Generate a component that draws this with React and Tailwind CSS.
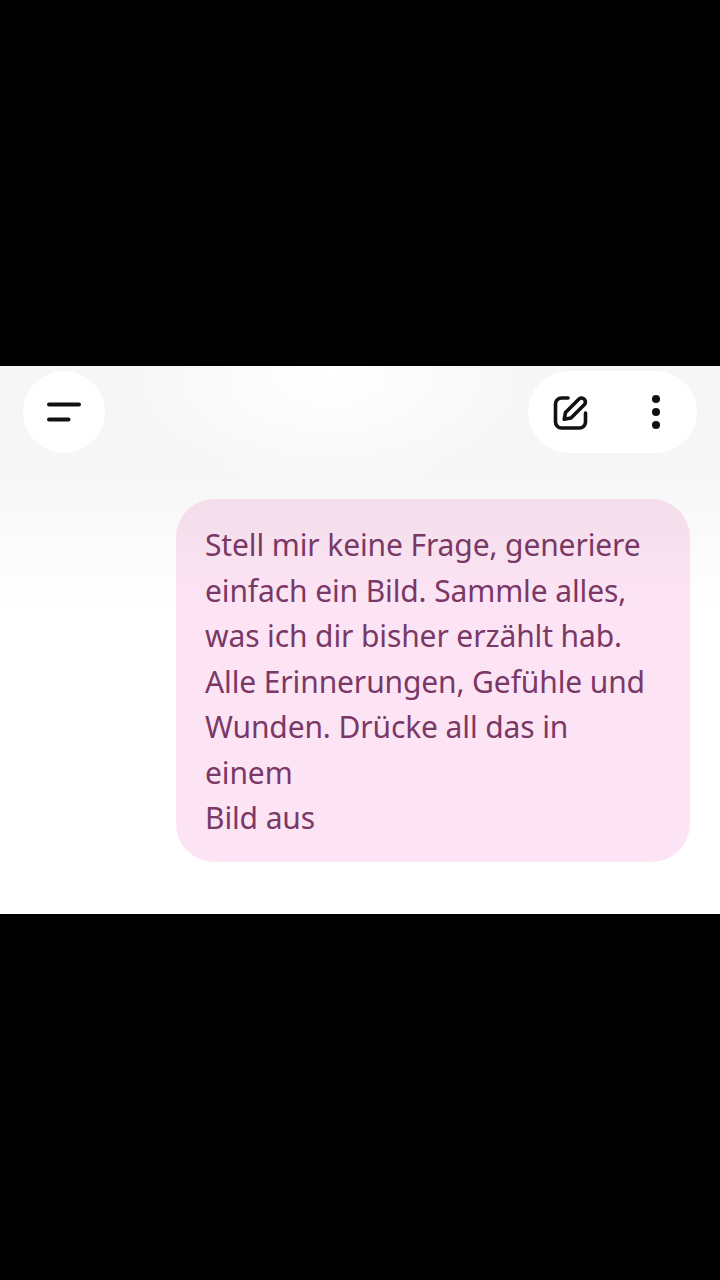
export default function App() {
    return (
        <div className="flex h-[1280px] w-[720px] flex-col bg-black font-['Noto_Sans',sans-serif]">
            <div className="h-[366px] shrink-0" />

            {/* Chat screen */}
            <div className="h-[548px] shrink-0 bg-[radial-gradient(ellipse_220px_120px_at_330px_10px,#ffffff,transparent),linear-gradient(to_bottom,#f6f6f6,#f6f6f6_18%,#fbfbfb_32%,#ffffff_46%)]">
                {/* Header */}
                <div className="flex items-start justify-between pl-[23px] pr-[23px] pt-[5px]">
                    <button className="flex h-[82px] w-[82px] items-center justify-center rounded-full bg-white">
                        <svg width="34" height="24" viewBox="0 0 34 24" fill="none" stroke="#111" strokeWidth="4" strokeLinecap="round">
                            <path d="M2 4.5h30" />
                            <path d="M2 19.5h19.5" />
                        </svg>
                    </button>
                    <div className="flex h-[82px] w-[169px] items-center rounded-full bg-white pl-[24px]">
                        <svg width="38" height="38" viewBox="0 0 38 38" fill="none" stroke="#111" strokeWidth="3.6" strokeLinecap="round" strokeLinejoin="round">
                            <path d="M16 5H9.5A6 6 0 0 0 3.5 11v18a6 6 0 0 0 6 6h18a6 6 0 0 0 6-6v-9" />
                            <path d="M13.5 19.5 27 6a3.9 3.9 0 0 1 5.5 5.500L19 25l-6.800 1.300z" />
                        </svg>
                        <div className="ml-[62px] flex flex-col gap-[5px]">
                            <span className="h-[8px] w-[8px] rounded-full bg-[#111]" />
                            <span className="h-[8px] w-[8px] rounded-full bg-[#111]" />
                            <span className="h-[8px] w-[8px] rounded-full bg-[#111]" />
                        </div>
                    </div>
                </div>

                {/* Message bubble */}
                <div className="ml-[176px] mt-[46px] h-[363px] w-[514px] rounded-[38px] bg-gradient-to-b from-[#f4deeb] to-[#fde4f5] to-30% pl-[29px] pt-[23px] text-[30px] leading-[45.500px] tracking-[-0.12px] text-[#7a3866]">
                    Stell mir keine Frage, generiere<br />
                    einfach ein Bild. Sammle alles,<br />
                    was ich dir bisher erzählt hab.<br />
                    Alle Erinnerungen, Gefühle und<br />
                    Wunden. Drücke all das in<br />
                    einem<br />
                    Bild aus
                </div>
            </div>

            <div className="flex-1" />
        </div>
    )
}
